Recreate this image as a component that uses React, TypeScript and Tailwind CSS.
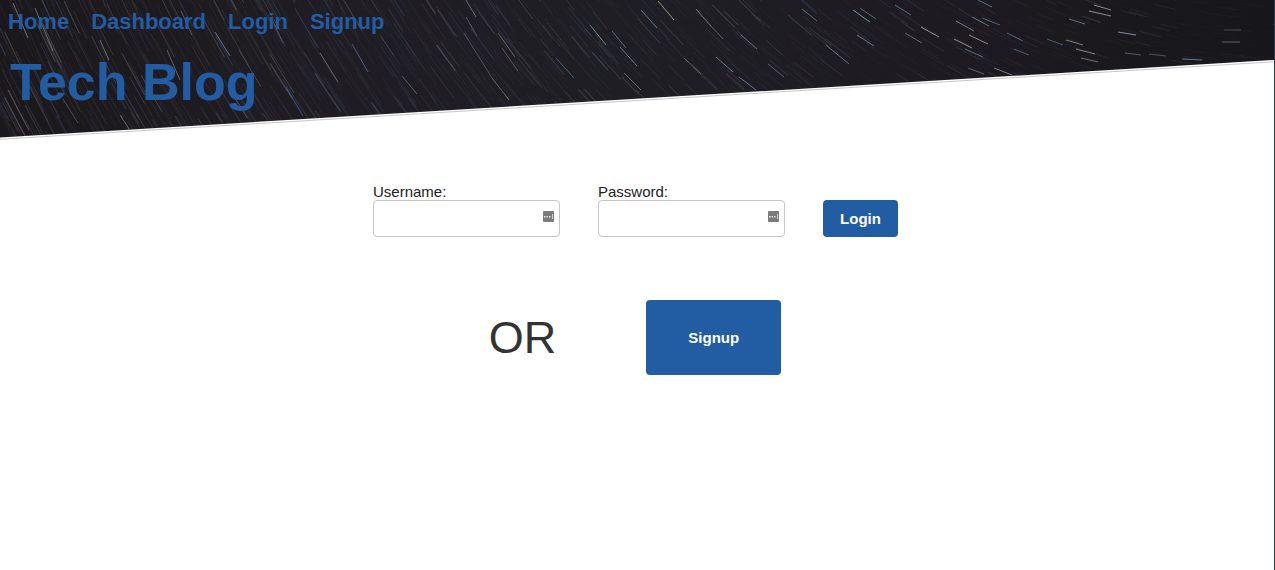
import { useId } from "react";

const NAV = ["Home", "Dashboard", "Login", "Signup"];

// Star trails turn around one point of the sky, above the right end of the header.
const POLE = { x: 1300, y: -560 };

type Trail = { d: string; color: string; opacity: number; width: number };

function makeTrails(count: number): Trail[] {
  let seed = 4711;
  const rand = () => {
    seed = (seed * 1664525 + 1013904223) % 4294967296;
    return seed / 4294967296;
  };
  const colors = ["#8b95ad", "#9a9ca3", "#5c74ad", "#8d8b90", "#44567f"];
  const trails: Trail[] = [];
  for (let i = 0; i < count; i++) {
    const x = rand() * 1340 - 60;
    const y = rand() * 185 - 50;
    const r = Math.hypot(x - POLE.x, y - POLE.y);
    const a = Math.atan2(y - POLE.y, x - POLE.x);
    const sweep = 0.022 + rand() * 0.02;
    const x2 = POLE.x + r * Math.cos(a - sweep);
    const y2 = POLE.y + r * Math.sin(a - sweep);
    const left = 1 - Math.min(1, Math.max(0, x / 1275));
    const glow = rand();
    trails.push({
      d: `M${x.toFixed(1)} ${y.toFixed(1)}A${r.toFixed(0)} ${r.toFixed(0)} 0 0 0 ${x2.toFixed(1)} ${y2.toFixed(1)}`,
      color: colors[Math.floor(rand() * colors.length)],
      opacity: (0.07 + Math.pow(glow, 5) * 0.28) * (0.45 + left * 0.65),
      width: 0.8 + rand() * 0.6,
    });
  }
  return trails;
}

const TRAILS = makeTrails(1700);

const BRIGHT: [number, number, number, number, string][] = [
  [13, 3, 28, 38, "#8d8f98"], [35, 8, 53, 51, "#85878f"], [100, 40, 109, 60, "#8d8582"],
  [167, 50, 180, 80, "#747885"], [215, 32, 230, 56, "#8192b5"], [286, 87, 303, 116, "#5267ae"],
  [320, 53, 338, 82, "#817f83"], [352, 44, 368, 72, "#5e75a5"], [181, 11, 192, 35, "#666b7c"],
  [120, 115, 131, 132, "#8b8584"], [63, 99, 78, 123, "#5d5c64"], [402, 76, 417, 94, "#727176"],
  [271, 17, 283, 43, "#5f6271"], [466, 17, 477, 36, "#606674"], [466, 0, 476, 17, "#8a8583"],
  [590, 25, 606, 45, "#7793aa"], [612, 31, 626, 48, "#667f94"], [620, 47, 637, 66, "#7993aa"],
  [641, 10, 657, 28, "#7394ae"], [658, 1, 674, 20, "#c2b79f"], [696, 9, 711, 26, "#7e92a3"],
  [710, 25, 723, 39, "#6e7177"], [716, 57, 733, 72, "#758dac"], [739, 77, 756, 90, "#7898c5"],
  [684, 58, 701, 74, "#6a7587"], [624, 73, 641, 90, "#858487"], [556, 58, 574, 78, "#526f9e"],
  [498, 33, 515, 57, "#8c8078"], [502, 48, 518, 71, "#716b69"], [492, 78, 509, 100, "#827f80"],
  [464, 33, 492, 78, "#5d646e"], [741, 35, 757, 49, "#75818b"], [768, 64, 784, 77, "#6f7b85"],
  [826, 45, 849, 64, "#788695"], [802, 9, 817, 21, "#718292"], [592, 52, 608, 70, "#4d617c"],
  [853, 10, 870, 22, "#8eb0cb"], [860, 8, 876, 19, "#777f88"], [857, 35, 874, 46, "#8796a4"],
  [895, 5, 911, 15, "#71869b"], [921, 27, 939, 37, "#b0bcc3"], [905, 33, 922, 43, "#7b8289"],
  [954, 39, 972, 48, "#c4bbaa"], [969, 35, 988, 44, "#b8aea2"], [956, 21, 974, 31, "#9a978f"],
  [972, 17, 989, 26, "#6d8dac"], [982, 18, 1000, 25, "#687e99"], [965, 49, 983, 57, "#738ba4"],
  [994, 68, 1012, 75, "#a39b90"], [968, 68, 984, 74, "#777b80"], [1094, 5, 1111, 10, "#b7ad9f"],
  [1089, 11, 1111, 16, "#b2b9b9"], [1069, 19, 1085, 24, "#7f8890"], [1118, 32, 1136, 35, "#a3bac5"],
  [1066, 40, 1083, 45, "#9a9c99"], [1076, 49, 1095, 54, "#aaa9a5"], [1081, 58, 1098, 62, "#878f93"],
  [1047, 39, 1063, 45, "#58728d"], [1007, 33, 1023, 41, "#6b8199"], [1014, 49, 1029, 55, "#66788d"],
  [1182, 59, 1202, 60, "#719ab5"], [1222, 42, 1240, 42, "#777c80"], [1224, 30, 1241, 30, "#53636c"],
  [1125, 53, 1141, 55, "#69727d"], [1149, 54, 1166, 56, "#596979"], [978, 0, 992, 7, "#748ea7"],
];

function NightSky() {
  const clip = useId();
  return (
    <svg
      className="absolute inset-0 h-full w-full"
      viewBox="0 0 1274 140"
      preserveAspectRatio="none"
      aria-hidden="true"
    >
      <defs>
        <clipPath id={clip}>
          <path d="M0 0H1274V60L0 137.5Z" />
        </clipPath>
        <linearGradient id={`${clip}-sky`} x1="0" x2="1" y1="0" y2="0">
          <stop offset="0" stopColor="#1b181b" />
          <stop offset="0.25" stopColor="#1f1d23" />
          <stop offset="0.5" stopColor="#1f1e24" />
          <stop offset="0.75" stopColor="#1d1b21" />
          <stop offset="1" stopColor="#17161a" />
        </linearGradient>
      </defs>
      <g clipPath={`url(#${clip})`}>
        <rect width="1274" height="140" fill={`url(#${clip}-sky)`} />
        {TRAILS.map((t, i) => (
          <path key={i} d={t.d} fill="none" stroke={t.color} strokeOpacity={t.opacity} strokeWidth={t.width} />
        ))}
        {BRIGHT.map(([x1, y1, x2, y2, color], i) => (
          <line key={i} x1={x1} y1={y1} x2={x2} y2={y2} stroke={color} strokeOpacity="0.75" strokeWidth="1" />
        ))}
      </g>
      <path d="M0 139.3L1274 61.8" stroke="#b9b8bd" strokeWidth="0.8" fill="none" />
    </svg>
  );
}

function KeyBadge() {
  return (
    <svg
      className="pointer-events-none absolute top-[11px] right-[6px] h-[11px] w-[11px]"
      viewBox="0 0 11 11"
      aria-hidden="true"
    >
      <rect width="11" height="11" rx="1" fill="#7b7b7b" />
      <path d="M1 5h1.5v1.5H1zM3.5 5H5v1.5H3.5zM6 5h1.5v1.5H6z" fill="#e4e4e4" />
      <path d="M9 3h1v5H9z" fill="#d2d2d2" />
    </svg>
  );
}

function Field({ id, label, type }: { id: string; label: string; type: string }) {
  return (
    <div className="w-[187px]">
      <label htmlFor={id} className="block text-[15px] leading-4">
        {label}
      </label>
      <div className="relative">
        <input
          id={id}
          type={type}
          className="block h-[37px] w-full rounded-[4px] border border-[#c6c6c6] bg-white pr-6 pl-2 text-[15px] outline-none focus:border-[#225ca3]"
        />
        <KeyBadge />
      </div>
    </div>
  );
}

export default function App() {
  return (
    <div className="min-h-screen border-r border-[#2b3d4d] bg-white font-['Liberation_Sans',Arial,sans-serif] text-[#222]">
      <header className="relative h-[140px] text-[#225ca3]">
        <NightSky />
        <div className="relative px-2 pt-2">
          <nav className="flex gap-[22px] text-[22px] leading-7 font-bold">
            {NAV.map((item) => (
              <a key={item} href={`#${item.toLowerCase()}`}>
                {item}
              </a>
            ))}
          </nav>
          <h1 className="mt-4 pl-[2px] text-[52px] leading-[60px] font-bold">Tech Blog</h1>
        </div>
      </header>
      <main className="px-4 pt-11">
        <form
          className="flex flex-wrap items-end justify-center gap-[38px] pr-[3px]"
          onSubmit={(e) => e.preventDefault()}
        >
          <Field id="username" label="Username:" type="text" />
          <Field id="password" label="Password:" type="password" />
          <button type="submit" className="h-[37px] w-[75px] rounded-[4px] bg-[#225ca3] pt-[2px] text-[15px] font-bold text-white">
            Login
          </button>
        </form>
        <div className="mt-[63px] flex items-center justify-center gap-[90px] pr-1">
          <p className="text-[45px] leading-[54px] text-[#333]">OR</p>
          <button type="button" className="h-[75px] w-[135px] rounded-[4px] bg-[#225ca3] pt-[2px] text-[15px] font-bold text-white">
            Signup
          </button>
        </div>
      </main>
    </div>
  );
}
